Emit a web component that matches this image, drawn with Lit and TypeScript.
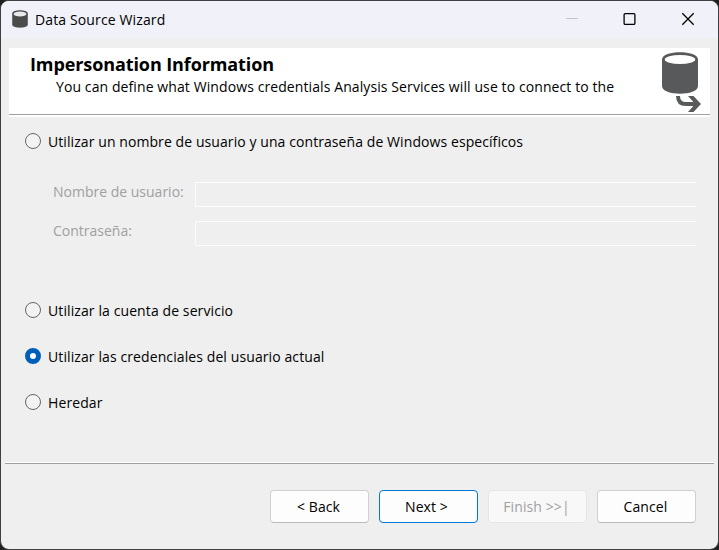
import { LitElement, html, css } from "lit";
import { customElement, property, state } from "lit/decorators.js";
import { classMap } from "lit/directives/class-map.js";

@customElement("wizard-option")
class WizardOption extends LitElement {
  @property({ type: Boolean, reflect: true }) checked = false;

  static styles = css`
    :host {
      display: flex;
      align-items: center;
      height: 20px;
      gap: 7px;
      letter-spacing: 0.08px;
    }
    .dot {
      box-sizing: border-box;
      width: 16px;
      height: 16px;
      border: 1px solid #666;
      border-radius: 50%;
      background: #f3f3f3;
    }
    .dot.on {
      border: 5px solid #005fb8;
      background: #fff;
    }
    .label {
      padding-top: 1px;
    }
  `;

  render() {
    return html`<span class=${classMap({ dot: true, on: this.checked })}></span
      ><span class="label"><slot></slot></span>`;
  }
}

@customElement("app-root")
class AppRoot extends LitElement {
  @state() private selected = "current";

  static styles = css`
    :host {
      display: block;
      width: 719px;
      height: 550px;
      background: #202020;
      font: 14px/20px "Open Sans", "Noto Sans", sans-serif;
      color: #000;
    }
    * {
      box-sizing: border-box;
    }
    .window {
      display: flex;
      flex-direction: column;
      width: 719px;
      height: 550px;
      border: 1px solid #3f3e42;
      border-radius: 9px;
      background: #efefef;
      overflow: hidden;
      white-space: nowrap;
    }
    .titlebar {
      display: flex;
      height: 37px;
      background: #f1f2f9;
      padding-left: 10px;
    }
    .app-icon {
      width: 18px;
      height: 20px;
      margin-top: 8px;
    }
    .title {
      margin: 9px 0 0 6px;
      flex: 1;
      letter-spacing: 0.13px;
    }
    .controls {
      width: 160px;
      height: 37px;
    }
    .banner {
      display: flex;
      justify-content: space-between;
      height: 69px;
      margin: 10px 8px 0;
      background: linear-gradient(#fff 66px, #a0a0a0 66px, #a0a0a0 67px, #fff 67px);
    }
    .heading {
      margin: 4px 0 0 21px;
      font-size: 18px;
      line-height: 24px;
      font-weight: 700;
      letter-spacing: -0.1px;
    }
    .sub {
      margin: 1px 0 0 47px;
      letter-spacing: 0.095px;
    }
    .source-icon {
      width: 58px;
      height: 66px;
    }
    .content {
      display: flex;
      flex-direction: column;
      height: 345px;
      padding: 14px 22px 0 24px;
    }
    .fields {
      display: grid;
      grid-template-columns: 142px 1fr;
      row-gap: 14px;
      margin: 31px 0 54px;
      padding-left: 28px;
      color: #a0a0a0;
    }
    .field {
      height: 25px;
      border: 1px solid #fbfbfb;
      border-right: 0;
    }
    .choices {
      display: flex;
      flex-direction: column;
      gap: 26px;
    }
    .choices wizard-option {
      letter-spacing: 0.1px;
    }
    .rule {
      height: 2px;
      margin: 0 4px;
      background: linear-gradient(#fff 1px, #a0a0a0 1px);
    }
    .actions {
      display: flex;
      justify-content: flex-end;
      gap: 10px;
      padding: 26px 22px 0 0;
    }
    button {
      width: 99px;
      height: 33px;
      padding: 0 2px 0 0;
      font: inherit;
      letter-spacing: 0.1px;
      color: #000;
      background: #fdfdfd;
      border: 1px solid #d0d0d0;
      border-bottom-color: #bababa;
      border-radius: 4px;
    }
    .primary {
      border-color: #0078d4;
      padding-right: 4px;
    }
    button:disabled {
      color: #a0a0a0;
      background: #f8f8f8;
      border-color: #e6e6e6;
    }
  `;

  render() {
    const pick = (id: string) => () => (this.selected = id);
    return html`
      <div class="window">
        <div class="titlebar">
          <svg class="app-icon" viewBox="0 0 18 20">
            <path d="M1.2 4.5C1.2 .3 16.8 .3 16.8 4.5V15.5C16.8 19.7 1.2 19.7 1.2 15.5Z" fill="#4b4b4b" />
            <ellipse cx="9" cy="5" rx="6.4" ry="2.5" fill="#e9e9ed" />
          </svg>
          <div class="title">Data Source Wizard</div>
          <svg class="controls" viewBox="0 0 160 37" fill="none">
            <path d="M8 17.5H20" stroke="#c3c4ca" />
            <rect x="66.1" y="12.6" width="10.8" height="10.8" rx="1.2" stroke="#000" stroke-width="1.3" />
            <path d="M124.3 12.3L135.7 23.7M135.7 12.3L124.3 23.7" stroke="#000" stroke-width="1.3" />
          </svg>
        </div>
        <header class="banner">
          <div>
            <div class="heading">Impersonation Information</div>
            <div class="sub">
              You can define what Windows credentials Analysis Services will use to connect to the
            </div>
          </div>
          <svg class="source-icon" viewBox="0 0 58 66">
            <path d="M10 11.5C10 1.8 46 1.8 46 11.5V38C46 48.3 10 48.3 10 38Z" fill="#58595b" />
            <ellipse cx="28" cy="11.5" rx="15.2" ry="4.6" fill="#fff" />
            <path d="M26 48C26 54 29 56 34 56H45" fill="none" stroke="#58595b" stroke-width="4" />
            <path d="M36 48H41.5L49 56L41.5 64H36L43.2 56Z" fill="#58595b" />
          </svg>
        </header>
        <main class="content">
          <wizard-option ?checked=${this.selected === "specific"} @click=${pick("specific")}
            >Utilizar un nombre de usuario y una contraseña de Windows específicos</wizard-option
          >
          <div class="fields">
            <div class="field-label">Nombre de usuario:</div>
            <div class="field"></div>
            <div class="field-label">Contraseña:</div>
            <div class="field"></div>
          </div>
          <div class="choices">
            <wizard-option ?checked=${this.selected === "service"} @click=${pick("service")}
              >Utilizar la cuenta de servicio</wizard-option
            >
            <wizard-option ?checked=${this.selected === "current"} @click=${pick("current")}
              >Utilizar las credenciales del usuario actual</wizard-option
            >
            <wizard-option ?checked=${this.selected === "inherit"} @click=${pick("inherit")}
              >Heredar</wizard-option
            >
          </div>
        </main>
        <div class="rule"></div>
        <footer class="actions">
          <button>&lt; Back</button>
          <button class="primary">Next &gt;</button>
          <button disabled>Finish &gt;&gt;|</button>
          <button>Cancel</button>
        </footer>
      </div>
    `;
  }
}
